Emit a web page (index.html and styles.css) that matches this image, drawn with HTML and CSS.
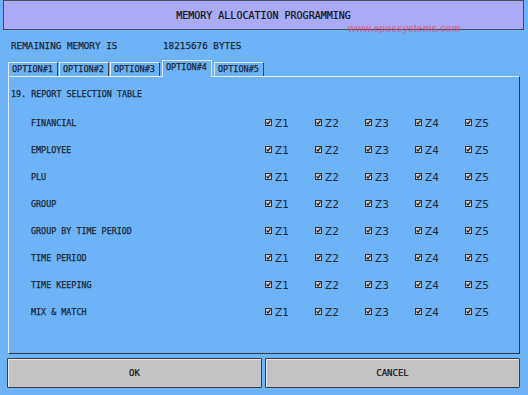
FILE: index.html
```html
<!DOCTYPE html>
<html>
<head>
<meta charset="utf-8">
<link rel="stylesheet" href="styles.css">
</head>
<body>
<div class="screen">
  <div class="titlebar">MEMORY ALLOCATION PROGRAMMING</div>
  <div class="watermark">www.epossystems.com</div>
  <div class="memory"><span class="mem-label">REMAINING MEMORY IS</span><span>18215676 BYTES</span></div>
  <div class="tabs">
    <div class="tab">OPTION#1</div>
    <div class="tab">OPTION#2</div>
    <div class="tab">OPTION#3</div>
    <div class="tab active">OPTION#4</div>
    <div class="tab">OPTION#5</div>
  </div>
  <div class="panel">
    <div class="heading">19. REPORT SELECTION TABLE</div>
    <div class="rows">
      <div class="row"><span class="label">FINANCIAL</span>
        <span class="chk"><svg class="box" viewBox="0 0 7 7"><rect x="0.5" y="0.5" width="6" height="6" fill="#c9c9c9" stroke="#333"/><path d="M1.6 3.4 L3 5 L5.5 1.6" fill="none" stroke="#222" stroke-width="1.2"/></svg>Z1</span>
        <span class="chk"><svg class="box" viewBox="0 0 7 7"><rect x="0.5" y="0.5" width="6" height="6" fill="#c9c9c9" stroke="#333"/><path d="M1.6 3.4 L3 5 L5.5 1.6" fill="none" stroke="#222" stroke-width="1.2"/></svg>Z2</span>
        <span class="chk"><svg class="box" viewBox="0 0 7 7"><rect x="0.5" y="0.5" width="6" height="6" fill="#c9c9c9" stroke="#333"/><path d="M1.6 3.4 L3 5 L5.5 1.6" fill="none" stroke="#222" stroke-width="1.2"/></svg>Z3</span>
        <span class="chk"><svg class="box" viewBox="0 0 7 7"><rect x="0.5" y="0.5" width="6" height="6" fill="#c9c9c9" stroke="#333"/><path d="M1.6 3.4 L3 5 L5.5 1.6" fill="none" stroke="#222" stroke-width="1.2"/></svg>Z4</span>
        <span class="chk"><svg class="box" viewBox="0 0 7 7"><rect x="0.5" y="0.5" width="6" height="6" fill="#c9c9c9" stroke="#333"/><path d="M1.6 3.4 L3 5 L5.5 1.6" fill="none" stroke="#222" stroke-width="1.2"/></svg>Z5</span>
      </div>
      <div class="row"><span class="label">EMPLOYEE</span>
        <span class="chk"><svg class="box" viewBox="0 0 7 7"><rect x="0.5" y="0.5" width="6" height="6" fill="#c9c9c9" stroke="#333"/><path d="M1.6 3.4 L3 5 L5.5 1.6" fill="none" stroke="#222" stroke-width="1.2"/></svg>Z1</span>
        <span class="chk"><svg class="box" viewBox="0 0 7 7"><rect x="0.5" y="0.5" width="6" height="6" fill="#c9c9c9" stroke="#333"/><path d="M1.6 3.4 L3 5 L5.5 1.6" fill="none" stroke="#222" stroke-width="1.2"/></svg>Z2</span>
        <span class="chk"><svg class="box" viewBox="0 0 7 7"><rect x="0.5" y="0.5" width="6" height="6" fill="#c9c9c9" stroke="#333"/><path d="M1.6 3.4 L3 5 L5.5 1.6" fill="none" stroke="#222" stroke-width="1.2"/></svg>Z3</span>
        <span class="chk"><svg class="box" viewBox="0 0 7 7"><rect x="0.5" y="0.5" width="6" height="6" fill="#c9c9c9" stroke="#333"/><path d="M1.6 3.4 L3 5 L5.5 1.6" fill="none" stroke="#222" stroke-width="1.2"/></svg>Z4</span>
        <span class="chk"><svg class="box" viewBox="0 0 7 7"><rect x="0.5" y="0.5" width="6" height="6" fill="#c9c9c9" stroke="#333"/><path d="M1.6 3.4 L3 5 L5.5 1.6" fill="none" stroke="#222" stroke-width="1.2"/></svg>Z5</span>
      </div>
      <div class="row"><span class="label">PLU</span>
        <span class="chk"><svg class="box" viewBox="0 0 7 7"><rect x="0.5" y="0.5" width="6" height="6" fill="#c9c9c9" stroke="#333"/><path d="M1.6 3.4 L3 5 L5.5 1.6" fill="none" stroke="#222" stroke-width="1.2"/></svg>Z1</span>
        <span class="chk"><svg class="box" viewBox="0 0 7 7"><rect x="0.5" y="0.5" width="6" height="6" fill="#c9c9c9" stroke="#333"/><path d="M1.6 3.4 L3 5 L5.5 1.6" fill="none" stroke="#222" stroke-width="1.2"/></svg>Z2</span>
        <span class="chk"><svg class="box" viewBox="0 0 7 7"><rect x="0.5" y="0.5" width="6" height="6" fill="#c9c9c9" stroke="#333"/><path d="M1.6 3.4 L3 5 L5.5 1.6" fill="none" stroke="#222" stroke-width="1.2"/></svg>Z3</span>
        <span class="chk"><svg class="box" viewBox="0 0 7 7"><rect x="0.5" y="0.5" width="6" height="6" fill="#c9c9c9" stroke="#333"/><path d="M1.6 3.4 L3 5 L5.5 1.6" fill="none" stroke="#222" stroke-width="1.2"/></svg>Z4</span>
        <span class="chk"><svg class="box" viewBox="0 0 7 7"><rect x="0.5" y="0.5" width="6" height="6" fill="#c9c9c9" stroke="#333"/><path d="M1.6 3.4 L3 5 L5.5 1.6" fill="none" stroke="#222" stroke-width="1.2"/></svg>Z5</span>
      </div>
      <div class="row"><span class="label">GROUP</span>
        <span class="chk"><svg class="box" viewBox="0 0 7 7"><rect x="0.5" y="0.5" width="6" height="6" fill="#c9c9c9" stroke="#333"/><path d="M1.6 3.4 L3 5 L5.5 1.6" fill="none" stroke="#222" stroke-width="1.2"/></svg>Z1</span>
        <span class="chk"><svg class="box" viewBox="0 0 7 7"><rect x="0.5" y="0.5" width="6" height="6" fill="#c9c9c9" stroke="#333"/><path d="M1.6 3.4 L3 5 L5.5 1.6" fill="none" stroke="#222" stroke-width="1.2"/></svg>Z2</span>
        <span class="chk"><svg class="box" viewBox="0 0 7 7"><rect x="0.5" y="0.5" width="6" height="6" fill="#c9c9c9" stroke="#333"/><path d="M1.6 3.4 L3 5 L5.5 1.6" fill="none" stroke="#222" stroke-width="1.2"/></svg>Z3</span>
        <span class="chk"><svg class="box" viewBox="0 0 7 7"><rect x="0.5" y="0.5" width="6" height="6" fill="#c9c9c9" stroke="#333"/><path d="M1.6 3.4 L3 5 L5.5 1.6" fill="none" stroke="#222" stroke-width="1.2"/></svg>Z4</span>
        <span class="chk"><svg class="box" viewBox="0 0 7 7"><rect x="0.5" y="0.5" width="6" height="6" fill="#c9c9c9" stroke="#333"/><path d="M1.6 3.4 L3 5 L5.5 1.6" fill="none" stroke="#222" stroke-width="1.2"/></svg>Z5</span>
      </div>
      <div class="row"><span class="label">GROUP BY TIME PERIOD</span>
        <span class="chk"><svg class="box" viewBox="0 0 7 7"><rect x="0.5" y="0.5" width="6" height="6" fill="#c9c9c9" stroke="#333"/><path d="M1.6 3.4 L3 5 L5.5 1.6" fill="none" stroke="#222" stroke-width="1.2"/></svg>Z1</span>
        <span class="chk"><svg class="box" viewBox="0 0 7 7"><rect x="0.5" y="0.5" width="6" height="6" fill="#c9c9c9" stroke="#333"/><path d="M1.6 3.4 L3 5 L5.5 1.6" fill="none" stroke="#222" stroke-width="1.2"/></svg>Z2</span>
        <span class="chk"><svg class="box" viewBox="0 0 7 7"><rect x="0.5" y="0.5" width="6" height="6" fill="#c9c9c9" stroke="#333"/><path d="M1.6 3.4 L3 5 L5.5 1.6" fill="none" stroke="#222" stroke-width="1.2"/></svg>Z3</span>
        <span class="chk"><svg class="box" viewBox="0 0 7 7"><rect x="0.5" y="0.5" width="6" height="6" fill="#c9c9c9" stroke="#333"/><path d="M1.6 3.4 L3 5 L5.5 1.6" fill="none" stroke="#222" stroke-width="1.2"/></svg>Z4</span>
        <span class="chk"><svg class="box" viewBox="0 0 7 7"><rect x="0.5" y="0.5" width="6" height="6" fill="#c9c9c9" stroke="#333"/><path d="M1.6 3.4 L3 5 L5.5 1.6" fill="none" stroke="#222" stroke-width="1.2"/></svg>Z5</span>
      </div>
      <div class="row"><span class="label">TIME PERIOD</span>
        <span class="chk"><svg class="box" viewBox="0 0 7 7"><rect x="0.5" y="0.5" width="6" height="6" fill="#c9c9c9" stroke="#333"/><path d="M1.6 3.4 L3 5 L5.5 1.6" fill="none" stroke="#222" stroke-width="1.2"/></svg>Z1</span>
        <span class="chk"><svg class="box" viewBox="0 0 7 7"><rect x="0.5" y="0.5" width="6" height="6" fill="#c9c9c9" stroke="#333"/><path d="M1.6 3.4 L3 5 L5.5 1.6" fill="none" stroke="#222" stroke-width="1.2"/></svg>Z2</span>
        <span class="chk"><svg class="box" viewBox="0 0 7 7"><rect x="0.5" y="0.5" width="6" height="6" fill="#c9c9c9" stroke="#333"/><path d="M1.6 3.4 L3 5 L5.5 1.6" fill="none" stroke="#222" stroke-width="1.2"/></svg>Z3</span>
        <span class="chk"><svg class="box" viewBox="0 0 7 7"><rect x="0.5" y="0.5" width="6" height="6" fill="#c9c9c9" stroke="#333"/><path d="M1.6 3.4 L3 5 L5.5 1.6" fill="none" stroke="#222" stroke-width="1.2"/></svg>Z4</span>
        <span class="chk"><svg class="box" viewBox="0 0 7 7"><rect x="0.5" y="0.5" width="6" height="6" fill="#c9c9c9" stroke="#333"/><path d="M1.6 3.4 L3 5 L5.5 1.6" fill="none" stroke="#222" stroke-width="1.2"/></svg>Z5</span>
      </div>
      <div class="row"><span class="label">TIME KEEPING</span>
        <span class="chk"><svg class="box" viewBox="0 0 7 7"><rect x="0.5" y="0.5" width="6" height="6" fill="#c9c9c9" stroke="#333"/><path d="M1.6 3.4 L3 5 L5.5 1.6" fill="none" stroke="#222" stroke-width="1.2"/></svg>Z1</span>
        <span class="chk"><svg class="box" viewBox="0 0 7 7"><rect x="0.5" y="0.5" width="6" height="6" fill="#c9c9c9" stroke="#333"/><path d="M1.6 3.4 L3 5 L5.5 1.6" fill="none" stroke="#222" stroke-width="1.2"/></svg>Z2</span>
        <span class="chk"><svg class="box" viewBox="0 0 7 7"><rect x="0.5" y="0.5" width="6" height="6" fill="#c9c9c9" stroke="#333"/><path d="M1.6 3.4 L3 5 L5.5 1.6" fill="none" stroke="#222" stroke-width="1.2"/></svg>Z3</span>
        <span class="chk"><svg class="box" viewBox="0 0 7 7"><rect x="0.5" y="0.5" width="6" height="6" fill="#c9c9c9" stroke="#333"/><path d="M1.6 3.4 L3 5 L5.5 1.6" fill="none" stroke="#222" stroke-width="1.2"/></svg>Z4</span>
        <span class="chk"><svg class="box" viewBox="0 0 7 7"><rect x="0.5" y="0.5" width="6" height="6" fill="#c9c9c9" stroke="#333"/><path d="M1.6 3.4 L3 5 L5.5 1.6" fill="none" stroke="#222" stroke-width="1.2"/></svg>Z5</span>
      </div>
      <div class="row"><span class="label">MIX &amp; MATCH</span>
        <span class="chk"><svg class="box" viewBox="0 0 7 7"><rect x="0.5" y="0.5" width="6" height="6" fill="#c9c9c9" stroke="#333"/><path d="M1.6 3.4 L3 5 L5.5 1.6" fill="none" stroke="#222" stroke-width="1.2"/></svg>Z1</span>
        <span class="chk"><svg class="box" viewBox="0 0 7 7"><rect x="0.5" y="0.5" width="6" height="6" fill="#c9c9c9" stroke="#333"/><path d="M1.6 3.4 L3 5 L5.5 1.6" fill="none" stroke="#222" stroke-width="1.2"/></svg>Z2</span>
        <span class="chk"><svg class="box" viewBox="0 0 7 7"><rect x="0.5" y="0.5" width="6" height="6" fill="#c9c9c9" stroke="#333"/><path d="M1.6 3.4 L3 5 L5.5 1.6" fill="none" stroke="#222" stroke-width="1.2"/></svg>Z3</span>
        <span class="chk"><svg class="box" viewBox="0 0 7 7"><rect x="0.5" y="0.5" width="6" height="6" fill="#c9c9c9" stroke="#333"/><path d="M1.6 3.4 L3 5 L5.5 1.6" fill="none" stroke="#222" stroke-width="1.2"/></svg>Z4</span>
        <span class="chk"><svg class="box" viewBox="0 0 7 7"><rect x="0.5" y="0.5" width="6" height="6" fill="#c9c9c9" stroke="#333"/><path d="M1.6 3.4 L3 5 L5.5 1.6" fill="none" stroke="#222" stroke-width="1.2"/></svg>Z5</span>
      </div>
    </div>
  </div>
  <div class="buttons">
    <div class="btn">OK</div>
    <div class="btn">CANCEL</div>
  </div>
</div>
</body>
</html>
```
FILE: styles.css
```css
html, body {
  margin: 0;
  padding: 0;
}
body {
  width: 528px;
  height: 395px;
  background: #6db3f6;
  overflow: hidden;
}
.screen {
  position: relative;
  width: 528px;
  height: 395px;
  font-family: "DejaVu Sans Mono", "Liberation Mono", monospace;
  color: #1b2838;
  font-size: 9px;
  -webkit-text-stroke: 0.25px #1b2838;
}
.titlebar {
  box-sizing: border-box;
  height: 30px;
  margin: 0 4px 0 3px;
  border: 1px solid #4a4a58;
  background: #aaaaf5;
  display: flex;
  align-items: center;
  justify-content: center;
  font-size: 10px;
  color: #111;
  -webkit-text-stroke: 0.2px #111;
}
.watermark {
  position: absolute;
  left: 348px;
  top: 23px;
  font-family: "Liberation Sans", Arial, sans-serif;
  font-weight: bold;
  font-size: 10px;
  color: rgba(225, 75, 115, 0.62);
  -webkit-text-stroke: 0;
}
.memory {
  box-sizing: border-box;
  height: 30px;
  padding: 10px 0 0 11px;
  display: flex;
  line-height: 12px;
  font-size: 9.3px;
}
.mem-label {
  width: 152px;
}
.tabs {
  height: 16px;
  margin-left: 8px;
  display: flex;
  align-items: flex-end;
  gap: 1px;
  position: relative;
  z-index: 2;
}
.tab {
  box-sizing: border-box;
  width: 50px;
  height: 14px;
  border-top: 1px solid #dce9f7;
  border-left: 1px solid #dce9f7;
  border-right: 1px solid #3a4656;
  padding-left: 3px;
  line-height: 12px;
  font-size: 8.5px;
  background: #6db3f6;
}
.tab.active {
  margin: 0 1px -1px 1px;
  border-right: 1px solid #dce9f7;
  line-height: 13px;
  height: 17px;
}
.panel {
  box-sizing: border-box;
  height: 278px;
  margin: 0 8px 0 8px;
  border-top: 1px solid #e2edf9;
  border-left: 1px solid #e2edf9;
  border-right: 1px solid #2f3a48;
  border-bottom: 1px solid #2f3a48;
  padding: 11px 0 0 2px;
}
.heading {
  line-height: 12px;
  font-size: 8.4px;
}
.rows {
  margin-top: 9px;
  padding-left: 20px;
}
.row {
  height: 27px;
  display: flex;
  align-items: center;
}
.label {
  width: 234px;
  font-size: 8.4px;
}
.chk {
  width: 50px;
  display: flex;
  align-items: center;
  font-family: "DejaVu Sans", "Liberation Sans", sans-serif;
  font-size: 10.5px;
  -webkit-text-stroke: 0;
}
.box {
  width: 7px;
  height: 7px;
  margin-right: 3px;
}
.buttons {
  display: flex;
  gap: 3px;
  margin: 4px 8px 0 7px;
}
.btn {
  box-sizing: border-box;
  flex: 1;
  height: 30px;
  background: #c3c3c3;
  border: 1px solid #3c3c44;
  box-shadow: inset 1px 1px 0 #e8e8e8;
  border-radius: 1px;
  display: flex;
  align-items: center;
  justify-content: center;
  font-size: 9px;
  color: #111;
  -webkit-text-stroke: 0.2px #111;
}
```
